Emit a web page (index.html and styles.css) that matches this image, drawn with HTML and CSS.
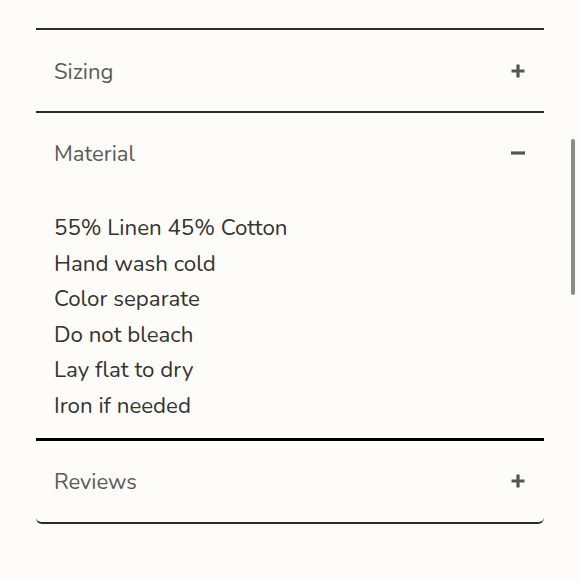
FILE: index.html
```html
<!DOCTYPE html>
<html>
<head>
<meta charset="utf-8">
<link rel="stylesheet" href="styles.css">
</head>
<body>
<div class="accordion">
  <div class="item item-first">
    <div class="header">
      <span class="title">Sizing</span>
      <svg class="icon" width="16" height="16" viewBox="0 0 16 16"><path d="M8 1.5v13M1.5 8h13" stroke="#555" stroke-width="3.2"/></svg>
    </div>
  </div>
  <div class="item item-open">
    <div class="header">
      <span class="title">Material</span>
      <svg class="icon" width="16" height="16" viewBox="0 0 16 16"><path d="M1 8h14" stroke="#555" stroke-width="3.2"/></svg>
    </div>
    <div class="content">
      <p>55% Linen 45% Cotton</p>
      <p>Hand wash cold</p>
      <p>Color separate</p>
      <p>Do not bleach</p>
      <p>Lay flat to dry</p>
      <p>Iron if needed</p>
    </div>
  </div>
  <div class="item item-last">
    <div class="header">
      <span class="title">Reviews</span>
      <svg class="icon" width="16" height="16" viewBox="0 0 16 16"><path d="M8 1.5v13M1.5 8h13" stroke="#555" stroke-width="3.2"/></svg>
    </div>
  </div>
</div>
<div class="scrollbar"></div>
</body>
</html>
```
FILE: styles.css
```css
html, body {
  margin: 0;
  padding: 0;
  background: #fefcf8;
  height: 100%;
  overflow: hidden;
}
body {
  font-family: "Nunito", "Lato", "Noto Sans", sans-serif;
  padding-top: 28px;
}
.accordion {
  margin-left: 36px;
  width: 508px;
  border-top: 2px solid #2e2e2e;
}
.item {
  border-bottom: 2px solid #2a2a2a;
}
.item-open {
  border-bottom: 3px solid #000;
}
.item-last {
  border-bottom-left-radius: 6px;
  border-bottom-right-radius: 6px;
}
.header {
  display: flex;
  align-items: center;
  justify-content: space-between;
  height: 81px;
  padding: 0 18px;
}
.item-open .header {
  height: 80px;
}
.title {
  font-size: 22px;
  color: #5a5a5a;
  position: relative;
  top: 1px;
}
.icon {
  display: block;
}
.content {
  padding: 17px 18px 14px;
}
.content p {
  margin: 0;
  font-size: 22.3px;
  line-height: 35.6px;
  color: #333;
}
.scrollbar {
  position: absolute;
  left: 571px;
  top: 139px;
  width: 4px;
  height: 156px;
  border-radius: 2px;
  background: #8a8a8a;
}
```
